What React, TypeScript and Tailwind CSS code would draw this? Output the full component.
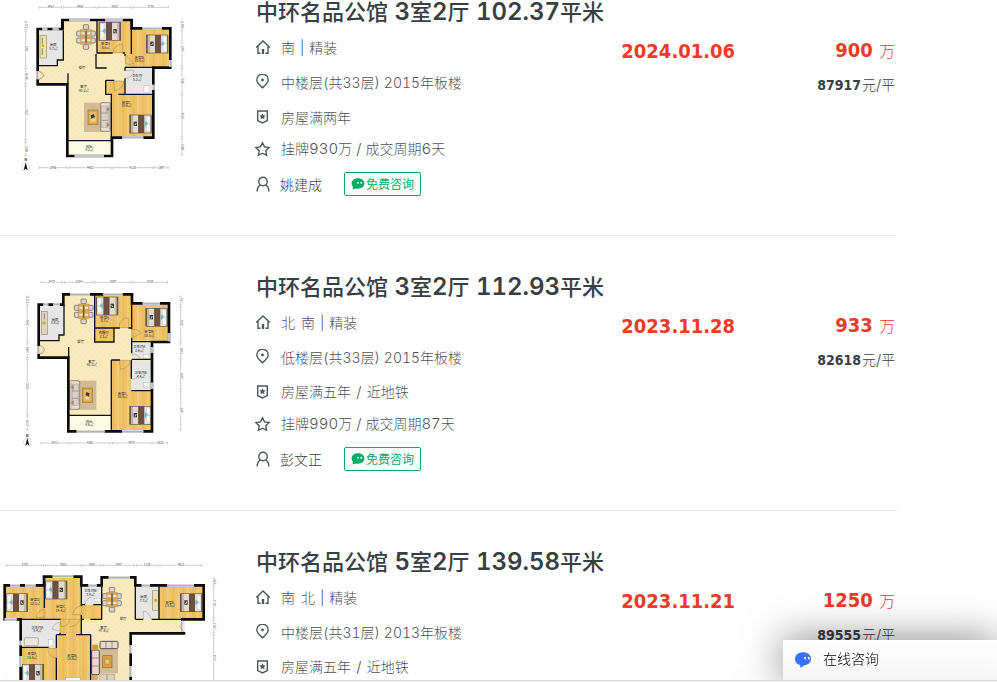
import type { ReactNode } from "react";

type Label = [x: number, y: number, name: string, area?: string];
type Bed = [x: number, y: number, flip?: boolean];
type Dim = [from: number, to: number, text: string];

type Plan = {
  viewBox: string;
  floor: string;
  wood: string;
  tile: string;
  balcony?: string;
  walls: string;
  thin: string;
  windows: string;
  doors: string;
  beds: Bed[];
  dining: [number, number];
  labels: Label[];
  top: [y: number, dims: Dim[]];
  bottom?: [y: number, dims: Dim[]];
  left?: [x: number, dims: Dim[]];
  right: [x: number, dims: Dim[]];
  compass?: [number, number];
  extra: ReactNode;
};

type House = {
  title: string;
  facing: string;
  floor: string;
  tags: string;
  deal: string;
  agent: string;
  date: string;
  price: string;
  unit: string;
  plan: Plan;
};

const Rug = ({ x, y, flip }: { x: number; y: number; flip?: boolean }) => (
  <g transform={`translate(${x} ${y})${flip ? " translate(82 0) scale(-1 1)" : ""}`}>
    <rect y="2" width="60" height="88" fill="#d3bb98" />
    <rect x="12" y="24" width="30" height="44" fill="#d9a34a" stroke="#a07c43" strokeWidth="2" />
    <rect x="17" y="30" width="20" height="32" fill="#e7bf6c" />
    <path d="M20 40l9-4 4 9-11 5z" fill="#3a3c3d" />
    <path d="M23 54h10" stroke="#eef3f4" strokeWidth="3" />
    <rect x="50" y="2" width="31" height="86" rx="5" fill="#e8ded3" stroke="#6e6159" strokeWidth="2" />
    <rect x="53" y="12" width="19" height="64" fill="#d9cfc5" stroke="#8e8177" />
    <path d="M53 33h20M53 55h20M76 8v74" stroke="#8e8177" strokeWidth="2" />
    <path d="M68 14l9 8-9 8zM68 60l9 8-9 8z" fill="#a58478" />
  </g>
);

const BedIcon = ({ x, y, flip }: { x: number; y: number; flip?: boolean }) => (
  <g transform={`translate(${x} ${y})${flip ? " translate(66 0) scale(-1 1)" : ""}`}>
    <rect width="66" height="56" fill="#6a5549" />
    <rect x="5" y="2" width="5" height="52" fill="#c9baa6" />
    <rect x="10" y="2" width="17" height="52" fill="#e3dace" />
    <rect x="13" y="21" width="10" height="13" fill="#34383a" />
    <path d="M15 31l5-7 2 2-4 6z" fill="#d8cf9e" />
    <rect x="27" y="2" width="18" height="52" fill="#6a4e40" />
    <path d="M33 2v52M39 2v52" stroke="#7d6253" strokeWidth="1" />
    <rect x="45" y="2" width="19" height="52" fill="#e6e2dc" />
    <path d="M51 5l11 2v20l-10-2zM51 30l11-2v22l-10-2z" fill="#fff" stroke="#a5b1b6" />
    <path d="M48 18l8 8-8 10-3-8z" fill="#7fb8c6" />
    <path d="M66 2v54" stroke="#4b3e36" strokeWidth="2" />
  </g>
);

const Dining = ({ x, y }: { x: number; y: number }) => (
  <g transform={`translate(${x} ${y})`}>
    <g fill="#d9d5cd" stroke="#5f574c" strokeWidth="2">
      <rect x="20" width="16" height="14" rx="3" />
      <rect x="20" y="60" width="16" height="14" rx="3" />
      <rect y="19" width="15" height="15" rx="3" />
      <rect y="40" width="15" height="15" rx="3" />
      <rect x="41" y="19" width="15" height="15" rx="3" />
      <rect x="41" y="40" width="15" height="15" rx="3" />
    </g>
    <rect x="12" y="15" width="32" height="44" fill="#d9a765" stroke="#a77f4d" />
    <path d="M15 26h9M32 26h9M15 47h9M32 47h9" stroke="#eeeadf" strokeWidth="6" />
    <path d="M28 18v38" stroke="#6f5a45" strokeWidth="4" />
    <circle cx="28" cy="37" r="3" fill="#5c6d38" />
  </g>
);

const Ruler = ({ at, dims, vertical }: { at: number; dims: Dim[]; vertical?: boolean }) => (
  <g transform={vertical ? `translate(${at} 0) rotate(90)` : `translate(0 ${at})`}>
    {dims.map(([from, to, text]) => {
      const mid = (from + to) / 2;
      const space = Math.min(12, (to - from) / 3);
      return (
        <g key={`${from}-${text}`}>
          <path
            d={`M${from + 3} 0H${mid - space}M${mid + space} 0H${to - 3}M${from + 3}-4v8M${to - 3}-4v8`}
            stroke="#9c9c9c"
            strokeWidth="1.5"
          />
          <text x={mid} y="3" textAnchor="middle" fontSize="9" fill="#444">
            {text}
          </text>
        </g>
      );
    })}
  </g>
);

const FloorPlan = ({ plan, name }: { plan: Plan; name: string }) => (
  <svg
    className="h-[180px] w-[230px] shrink-0"
    viewBox={plan.viewBox}
    fontFamily="'Noto Sans CJK SC', sans-serif"
    role="img"
    aria-label={name}
  >
    <defs>
      <pattern id="wood" width="30" height="40" patternUnits="userSpaceOnUse">
        <path d="M0 0h30v40H0z" fill="#efc468" />
        <path d="M7 0h7v40H7z" fill="#ecbd5c" />
        <path d="M21 0h6v40h-6z" fill="#f2cb76" />
      </pattern>
      <pattern id="stone" width="18" height="18" patternUnits="userSpaceOnUse">
        <path d="M0 0h18v18H0z" fill="#faebbf" />
        <path d="M0 0h9v9H0zM9 9h9v9H9z" fill="#f9e9ba" />
      </pattern>
    </defs>
    <path d={plan.floor} fill="url(#stone)" />
    <path d={plan.wood} fill="url(#wood)" />
    <path d={plan.tile} fill="#e6e6e6" />
    {plan.balcony ? <path d={plan.balcony} fill="#fafde3" /> : null}
    {plan.extra}
    {plan.beds.map(([x, y, flip]) => (
      <BedIcon key={`${x}-${y}`} x={x} y={y} flip={flip} />
    ))}
    <Dining x={plan.dining[0]} y={plan.dining[1]} />
    <path d={plan.walls} fill="none" stroke="#0b0b0b" strokeWidth="8" />
    <path d={plan.thin} fill="none" stroke="#111" strokeWidth="4" />
    <path d={plan.windows} fill="none" stroke="#fff" strokeWidth="8" />
    <path d={plan.windows} fill="none" stroke="#b2b6b9" strokeWidth="5" />
    <path d={plan.doors} fill="none" stroke="#7d6a45" strokeWidth="1" />
    {plan.labels.map(([x, y, text, area]) => (
      <text key={`${x}-${y}`} x={x} y={y} textAnchor="middle" fontSize="10" fill="#222">
        {text}
        {area ? (
          <tspan x={x} dy="11">
            {area}
          </tspan>
        ) : null}
      </text>
    ))}
    <Ruler at={plan.top[0]} dims={plan.top[1]} />
    {plan.bottom ? <Ruler at={plan.bottom[0]} dims={plan.bottom[1]} /> : null}
    {plan.left ? <Ruler at={plan.left[0]} dims={plan.left[1]} vertical /> : null}
    <Ruler at={plan.right[0]} dims={plan.right[1]} vertical />
    {plan.compass ? (
      <g transform={`translate(${plan.compass[0]} ${plan.compass[1]})`}>
        <text y="-16" textAnchor="middle" fontSize="10" fontWeight="700">
          N
        </text>
        <circle r="12" fill="#fff" stroke="#aaa" />
        <path d="M0-13l6 24-6-5-6 5z" fill="#111" />
      </g>
    ) : null}
  </svg>
);

const planA: Plan = {
  viewBox: "0 -9 690 540",
  floor: "M113 87H187V60H395V85H511V203H460V413H336V468H202V253H113Z",
  wood: "M292 64H393V90H508V200H375V160H292ZM335 283H317V243H375V283H460V411H335Z",
  tile: "M117 91H189V180H173V197H117ZM375 203H460V280H375Z",
  balcony: "M205 424H333V464H205Z",
  walls: "M113 87H187V60H395V85H511V203H460V413H336V468H202V253H113Z",
  thin: "M117 197H172V180H190V90M291 62V159H338M368 159H375M394 62V162M375 202H462M375 202V212M375 235V281M288 162V204H320M375 162V168M317 241H343M317 241V283H334V422M355 283H460M204 220V253M204 422H336M190 60V88",
  windows: "M208 60H270M316 60H368M427 85H486M127 87H142M158 87H176M511 180V200M460 254V270M366 413H430M224 468H312M113 214V238",
  doors: "M340 158A27 27 0 0 1 367 132V158ZM376 190A27 27 0 0 0 402 190L376 165ZM376 211H402A26 26 0 0 1 376 235M340 243H372A30 30 0 0 1 343 272ZM117 214L132 226L117 238Q128 238 132 226Q128 214 117 214",
  beds: [[297, 66, true], [438, 104], [388, 344]],
  dining: [230, 74],
  labels: [
    [160, 138, "厨房", "5.7㎡"],
    [317, 135, "卧室A", "8.6㎡"],
    [418, 176, "卧室B", "10.8㎡"],
    [246, 208, "餐厅"],
    [251, 265, "客厅", "40.2㎡"],
    [411, 232, "卫生间", "5.2㎡"],
    [379, 311, "卧室C", "14.6㎡"],
    [268, 443, "阳台", "4.2㎡"],
  ],
  top: [22, [[115, 188, "2462"], [188, 291, "3406"], [291, 396, "3582"], [396, 508, "3783"]]],
  bottom: [503, [[115, 204, "2956"], [204, 336, "4402"], [336, 460, "4128"], [460, 508, "1697"]]],
  left: [77, [[60, 92, "1021"], [92, 202, "3782"], [202, 254, "1698"], [254, 422, "5612"], [422, 470, "1398"]]],
  right: [546, [[60, 92, "1041"], [92, 202, "3792"], [202, 282, "2695"], [282, 412, "4501"], [412, 468, "1398"]]],
  compass: [77, 500],
  extra: (
    <>
      <rect x="120" y="106" width="19" height="68" fill="#eee4ac" stroke="#998d66" strokeWidth="2" />
      <path d="M127 113v18M127 145v20" stroke="#76925a" strokeWidth="3" />
      <circle cx="129" cy="137" r="4" fill="#d2af00" />
      <Rug x={252} y={306} />
      <rect x="432" y="256" width="15" height="22" fill="#fff" stroke="#999" />
    </>
  ),
};

const planB: Plan = {
  viewBox: "0 6 690 540",
  floor: "M116 104H190V73H396V100H507V216H456V482H336V482H205V263H116Z",
  wood: "M285 77H393V103H504V212H393V174H285ZM284 175H342V216H284ZM336 271H394V363H453V480H336Z",
  tile: "M120 108H193V196H176V212H120ZM395 216H454V267H395ZM394 274H453V362H394Z",
  balcony: "M208 437H332V481H208Z",
  walls: "M116 104H190V73H396V100H507V216H456V484H205V263H116Z",
  thin: "M120 212H177V195H194M192 104V194M284 74V216H342V174H360M284 174H360M385 174H395M395 100V178M395 204V250M395 215H460M395 268H456M334 270H360M334 270V484M394 270V326M394 362H456M206 231V263M206 436H334",
  windows: "M210 73H270M310 73H368M428 100H480M130 104H145M160 104H180M507 190V214M456 232V248M456 338V356M366 484H430M230 484H314M116 228V252",
  doors: "M357 173A28 28 0 0 1 385 143V173ZM396 178A28 28 0 0 1 423 190L396 204ZM359 271H390A28 28 0 0 1 361 298ZM396 252A26 26 0 0 1 420 266M396 328A26 26 0 0 0 420 306M119 226L134 240L119 252Q131 252 134 240Q131 226 119 226",
  beds: [[289, 80, true], [436, 114], [388, 408]],
  dining: [223, 87],
  labels: [
    [165, 152, "厨房", "5.8㎡"],
    [314, 146, "卧室A", "8.7㎡"],
    [311, 193, "衣帽间", "2.1㎡"],
    [447, 190, "卧室B", "10.5㎡"],
    [242, 220, "餐厅"],
    [275, 278, "客厅", "42.2㎡"],
    [418, 235, "卫生间A", "2.6㎡"],
    [422, 312, "卫生间B", "4.4㎡"],
    [367, 374, "卧室C", "16.5㎡"],
    [268, 458, "阳台", "4.6㎡"],
  ],
  top: [37, [[120, 190, "2478"], [190, 283, "3104"], [283, 396, "3807"], [396, 505, "3728"]]],
  bottom: [519, [[120, 207, "2912"], [207, 334, "4301"], [334, 456, "4075"], [456, 505, "1610"]]],
  left: [82, [[76, 106, "1021"], [106, 213, "3692"], [213, 266, "1802"], [266, 434, "5602"], [434, 482, "1623"]]],
  right: [542, [[76, 106, "912"], [106, 213, "3582"], [213, 270, "1903"], [270, 362, "3073"], [362, 482, "4042"]]],
  compass: [82, 516],
  extra: (
    <>
      <rect x="124" y="124" width="18" height="70" fill="#ddd5c1" stroke="#99907b" strokeWidth="2" />
      <path d="M133 130v18" stroke="#81896e" strokeWidth="3" />
      <circle cx="132" cy="159" r="5" fill="#d6ac00" />
      <Rug x={207} y={330} flip />
      <rect x="430" y="254" width="17" height="11" fill="#fff" stroke="#999" />
      <rect x="430" y="338" width="20" height="13" fill="#fff" stroke="#999" />
    </>
  ),
};

const planC: Plan = {
  viewBox: "0 -9 690 540",
  floor: "M14 106H132V80H244V106H305V82H406V106H611V208H554V250H392V520H62V208H14Z",
  wood: "M16 108H135V83H242V165H305V207H245V252H271V520H65V293H169V253H180V207H16ZM477 108H608V206H477Z",
  tile: "M65 208H180V253H169V290H65ZM245 108H306V162H245ZM405 108H477V206H405Z",
  walls: "M62 520V208H14V106H132V80H244V106H305V82H406V106H611V208H543M556 250H392V520",
  thin: "M133 80V174M244 80V168M244 195V210M305 82V208M244 164H255M280 164H306M244 208H252M271 208H306M62 208H182M180 248V254M169 254H198M228 254H272M244 208V254M169 254V294M169 323V520M62 292H146M272 254V520M406 106V208M406 208H430M455 208H545M477 106V208M392 249V254",
  windows: "M30 106H60M75 106H107M158 80H220M265 106H290M326 82H390M425 106H450M502 106H582M14 208H50M62 272V286M62 318V350M392 286V310M392 348V380M545 214V246",
  doors: "M133 178A25 25 0 0 0 109 202H133ZM244 168A28 28 0 0 0 218 194H244ZM180 208H208Q208 230 184 230ZM208 208H238Q233 230 208 230M180 217A26 26 0 0 0 157 238L180 243ZM169 296H144A25 25 0 0 0 169 323ZM255 164A22 22 0 0 1 274 142M430 207V183A25 25 0 0 1 452 207M552 214L538 229L552 246",
  beds: [[18, 130, true], [136, 92, true], [540, 130], [66, 342, true]],
  dining: [308, 112],
  labels: [
    [105, 153, "卧室D", "12.1㎡"],
    [182, 174, "卧室C", "14.4㎡"],
    [271, 126, "卫生间B", "3.4㎡"],
    [431, 145, "厨房", "7.7㎡"],
    [510, 161, "卧室E", "13.5㎡"],
    [369, 210, "餐厅"],
    [311, 236, "客厅", "47.8㎡"],
    [112, 236, "卫生间A", "5.4㎡"],
    [96, 316, "卧室A", "15.6㎡"],
    [216, 320, "卧室B", "18.8㎡"],
  ],
  top: [46, [[15, 134, "3788"], [134, 244, "3303"], [244, 306, "1805"], [306, 406, "2907"], [406, 477, "2120"], [477, 609, "4022"]]],
  right: [641, [[82, 108, "910"], [108, 208, "3203"], [208, 250, "1302"], [250, 398, "4502"]]],
  extra: (
    <>
      <rect x="458" y="121" width="17" height="60" fill="#e9dfba" stroke="#998d66" strokeWidth="2" />
      <circle cx="467" cy="151" r="5" fill="#d0ae16" />
      <rect x="73" y="263" width="42" height="24" rx="3" fill="#eee8dd" stroke="#9d9588" strokeWidth="2" />
      <rect x="145" y="268" width="14" height="20" fill="#fff" stroke="#999" />
      <rect x="283" y="145" width="18" height="10" fill="#fff" stroke="#999" />
      <rect x="298" y="290" width="56" height="80" fill="#d3bb98" />
      <rect x="308" y="317" width="28" height="36" fill="#dda03b" stroke="#936b2b" strokeWidth="2" />
      <path d="M315 328h14v14h-14z" fill="#f0c768" stroke="#49768a" />
      <rect x="300" y="274" width="54" height="22" rx="4" fill="#e7dacd" stroke="#594c44" strokeWidth="3" />
      <path d="M318 276v18M336 276v18" stroke="#776961" strokeWidth="2" />
      <rect x="275" y="300" width="23" height="74" rx="4" fill="#e7dacd" stroke="#594c44" strokeWidth="3" />
      <path d="M276 324h20M276 348h20" stroke="#776961" strokeWidth="2" />
      <rect x="277" y="284" width="17" height="13" fill="#d79825" />
      <rect x="277" y="377" width="15" height="14" fill="#dfad55" stroke="#a77431" />
      <path d="M298 373h22v18h-22zM322 373h22v18h-22z" fill="#ddd1c2" stroke="#6f625b" />
      <rect x="196" y="382" width="46" height="20" fill="#f8f6ef" stroke="#7b7165" />
    </>
  ),
};

const houses: House[] = [
  {
    title: "中环名品公馆 3室2厅 102.37平米",
    facing: "南 | 精装",
    floor: "中楼层(共33层) 2015年板楼",
    tags: "房屋满两年",
    deal: "挂牌930万 / 成交周期6天",
    agent: "姚建成",
    date: "2024.01.06",
    price: "900",
    unit: "87917",
    plan: planA,
  },
  {
    title: "中环名品公馆 3室2厅 112.93平米",
    facing: "北 南 | 精装",
    floor: "低楼层(共33层) 2015年板楼",
    tags: "房屋满五年 / 近地铁",
    deal: "挂牌990万 / 成交周期87天",
    agent: "彭文正",
    date: "2023.11.28",
    price: "933",
    unit: "82618",
    plan: planB,
  },
  {
    title: "中环名品公馆 5室2厅 139.58平米",
    facing: "南 北 | 精装",
    floor: "中楼层(共31层) 2013年板楼",
    tags: "房屋满五年 / 近地铁",
    deal: "挂牌1300万 / 成交周期60天",
    agent: "王建国",
    date: "2023.11.21",
    price: "1250",
    unit: "89555",
    plan: planC,
  },
];

// digits and punctuation are set in a wider latin face than the hanzi
const Mixed = ({ text, latin }: { text: string; latin: string }) => (
  <>
    {text.split(/([\d.()/| ]+)/).map((part, i) =>
      i % 2 ? (
        <span key={i} className={latin}>
          {part}
        </span>
      ) : (
        part
      ),
    )}
  </>
);

const Icon = ({ children }: { children: ReactNode }) => (
  <svg
    className="h-4 w-4 shrink-0 text-[#4f5759]"
    viewBox="0 0 16 16"
    fill="none"
    stroke="currentColor"
    strokeWidth="1.4"
    aria-hidden="true"
  >
    {children}
  </svg>
);

const HomeIcon = () => (
  <Icon>
    <path d="M1.2 8.6 8 2l6.8 6.6M3 7.5v6.8h2.5M13 7.5v6.8h-2.5" />
    <path d="M6.8 10h2.4v5H6.8z" fill="currentColor" stroke="none" />
  </Icon>
);

const PinIcon = () => (
  <Icon>
    <path d="M7.5 13.8C4.500 11 1.800 8.900 1.800 5.900a5.700 5.700 0 0 1 11.400 0c0 3-2.700 5.100-5.700 7.900Z" />
    <circle cx="7.5" cy="6" r="1.4" fill="currentColor" stroke="none" />
  </Icon>
);

const ShieldIcon = () => (
  <Icon>
    <path d="M2.7 2h9.600v9.600l-4.800 2.300-4.800-2.300Z" />
    <path
      d="m7.500 4.300 1 2 2.200.3-1.600 1.500.4 2.200-2-1-2 1 .4-2.200-1.600-1.500 2.200-.3Z"
      fill="currentColor"
      stroke="none"
    />
  </Icon>
);

const StarIcon = () => (
  <Icon>
    <path d="m7.500 1.800 2 4.100 4.600.7-3.300 3.200.8 4.500-4.100-2.100-4.100 2.100.8-4.500L.9 6.600l4.600-.7Z" />
  </Icon>
);

const UserIcon = () => (
  <Icon>
    <circle cx="8" cy="5.5" r="4.2" />
    <path d="M5.400 8.900C3.400 10 2.200 12.300 2.100 15.400M10.600 8.900c2 1.100 3.200 3.400 3.300 6.500" />
  </Icon>
);

const HouseItem = ({ house }: { house: House }) => (
  <li className="flex border-b border-[#ebebeb] pt-9 pr-0.5 pb-[30px]">
    <FloorPlan plan={house.plan} name={house.title} />
    <div className="ml-[25px] min-w-0 flex-1 text-sm whitespace-nowrap">
      <h2 className="mb-1 ml-px h-7 text-[22px] leading-[26px] font-medium text-[#394043]">
        <a href="#">
          <Mixed text={house.title} latin="font-[Inter] text-2xl leading-[26px] font-semibold tabular-nums" />
        </a>
      </h2>
      <p className="flex h-9 items-center gap-2.5">
        <HomeIcon />
        <span className="font-light text-[#4f5457]">
          <Mixed text={house.facing} latin="mx-px font-[Inter] text-sm" />
        </span>
      </p>
      <p className="flex h-[34px] items-center gap-2.5">
        <PinIcon />
        <span className="font-light text-[#4f5457]">
          <Mixed text={house.floor} latin="font-[Inter] text-sm tabular-nums" />
        </span>
      </p>
      <p className="flex h-9 items-center gap-2.5">
        <ShieldIcon />
        <span className="font-light text-[#4f5457]">
          <Mixed text={house.tags} latin="mx-px font-[Inter] text-[15px]" />
        </span>
      </p>
      <p className="flex h-7 items-center gap-2.5">
        <StarIcon />
        <span className="font-light text-[#4f5457]">
          <Mixed text={house.deal} latin="font-[Inter] text-[15px] tabular-nums" />
        </span>
      </p>
      <div className="flex h-[42px] items-center">
        <UserIcon />
        <a href="#" className="ml-[9px] font-light text-[#394043]">
          {house.agent}
        </a>
        <button
          type="button"
          className="ml-[22px] flex h-6 items-center gap-px rounded-xs border border-[#00ae66] px-1.5 text-xs text-[#00ae66]"
        >
          <svg className="h-3 w-3.5" viewBox="0 0 14 12" aria-hidden="true">
            <path
              d="M7 .3c3.700 0 6.400 2.200 6.400 5.200S10.700 10.700 7 10.700c-.8 0-1.600-.1-2.300-.3L1.500 11.600 2 8.800C1 7.900.6 6.800.6 5.500.6 2.500 3.300.3 7 .3Z"
              fill="#00ae66"
            />
            <circle cx="7" cy="4.8" r="1" fill="#fff" />
            <circle cx="10.3" cy="4.8" r="1" fill="#fff" />
          </svg>
          免费咨询
        </button>
      </div>
    </div>
    <div className="mt-[39px] w-[150px] text-xl leading-7 font-bold text-[#ed3b2a]">
      <span className="font-['DejaVu_Sans_Condensed']">{house.date}</span>
    </div>
    <div className="mt-[39px] w-[124px] text-right whitespace-nowrap">
      <p className="text-base leading-7 font-light text-[#ed3b2a]">
        <span className="mr-[3px] font-['DejaVu_Sans_Condensed'] text-xl leading-7 font-bold">{house.price}</span> 万
      </p>
      <p className="mt-2.5 text-sm leading-5 font-light text-[#394043]">
        <span className="mr-px font-['DejaVu_Sans_Condensed'] font-bold">{house.unit}</span>
        <Mixed text="元/平" latin="font-[Inter] text-[15px]" />
      </p>
    </div>
  </li>
);

const App = () => (
  <div className="h-screen overflow-hidden bg-white font-['Noto_Sans_CJK_SC',sans-serif]">
    <ul className="-mt-[39px] w-9/10">
      {houses.map((house) => (
        <HouseItem key={house.title} house={house} />
      ))}
    </ul>
    <button
      type="button"
      className="fixed right-0 bottom-0.5 flex h-10 w-[214px] items-center gap-3 bg-white bg-linear-to-b from-white to-[#f6f6f6] px-3 pb-1 text-sm font-light text-black shadow-[0_0_40px_rgba(0,0,0,0.5)]"
    >
      <svg className="mt-1 h-4 w-4" viewBox="0 0 16 16" aria-hidden="true">
        <path
          d="M8 .2c4.600 0 8 2.600 8 6.500 0 3.500-2.700 6-6.600 6.600L5.600 16l-.5-3C2 12.200 0 10 0 6.900 0 3 3.400.2 8 .2Z"
          fill="#3873ff"
        />
        <path
          d="M9.200 5.100h1.800v2.600c-1.300 0-1.800-.7-1.800-2.600ZM12.800 5.100h1.800v2.600c-1.300 0-1.800-.7-1.800-2.600Z"
          fill="#fff"
        />
      </svg>
      在线咨询
    </button>
    <footer className="fixed inset-x-0 bottom-0 h-0.5 border-t border-[#d8d8d8] bg-[#f2f2f2] shadow-[0_0_24px_rgba(0,0,0,0.1)]" />
  </div>
);

export default App;
